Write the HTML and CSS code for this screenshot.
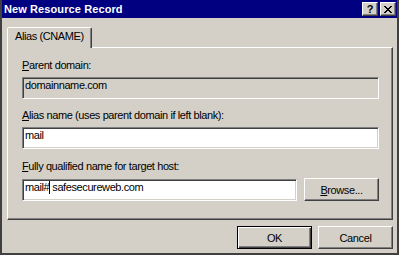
FILE: index.html
```html
<!DOCTYPE html>
<html lang="en">
<head>
    <meta charset="UTF-8" />
    <title>New Resource Record</title>
    <link rel="stylesheet" href="styles.css">
</head>
<body>
    <div class="window">
        <div class="titlebar">
            <span class="title">New Resource Record</span>
            <div class="caption-buttons">
                <span class="cap-btn help">?</span>
                <span class="cap-btn close">
                    <svg width="8" height="7" viewBox="0 0 8 7" shape-rendering="crispEdges">
                        <path d="M0 0h2v1H0zM6 0h2v1H6zM1 1h2v1H1zM5 1h2v1H5zM2 2h4v1H2zM3 3h2v1H3zM2 4h4v1H2zM1 5h2v1H1zM5 5h2v1H5zM0 6h2v1H0zM6 6h2v1H6z" fill="#000"/>
                    </svg>
                </span>
            </div>
        </div>
        <div class="client">
            <div class="tabs">
                <div class="tab active">Alias (CNAME)</div>
            </div>
            <div class="panel">
                <div class="field">
                    <label><u>P</u>arent domain:</label>
                    <div class="textbox readonly">domainname.com</div>
                </div>
                <div class="field">
                    <label><u>A</u>lias name (uses parent domain if left blank):</label>
                    <div class="textbox">mail</div>
                </div>
                <div class="field host">
                    <label><u>F</u>ully qualified name for target host:</label>
                    <div class="row">
                        <div class="textbox">mail#<span class="caret"></span>safesecureweb.com</div>
                        <button class="button"><u>B</u>rowse...</button>
                    </div>
                </div>
            </div>
            <div class="footer">
                <button class="button default">OK</button>
                <button class="button">Cancel</button>
            </div>
        </div>
    </div>
</body>
</html>
```

FILE: styles.css
```css
body {
    margin: 0;
    font-family: 'Liberation Sans', Arial, sans-serif;
    font-size: 11px;
    color: #000;
    overflow: hidden;
}
.window {
    width: 399px;
    height: 255px;
    box-sizing: border-box;
    background: #d4d0c8;
    border: 2px solid #404040;
    border-top: 0;
    display: flex;
    flex-direction: column;
}
.titlebar {
    height: 18px;
    flex: none;
    background: #000080;
    color: #fff;
    font-weight: bold;
    display: flex;
    align-items: center;
    justify-content: space-between;
    padding: 0 1px 0 2px;
}
.title {
    letter-spacing: 0.1px;
}
.caption-buttons {
    display: flex;
    gap: 2px;
}
.cap-btn {
    width: 16px;
    height: 14px;
    box-sizing: border-box;
    background: #d4d0c8;
    border: 1px solid;
    border-color: #fff #404040 #404040 #fff;
    box-shadow: inset -1px -1px #808080;
    display: flex;
    align-items: center;
    justify-content: center;
    color: #000;
    font-weight: bold;
    font-size: 11px;
    line-height: 12px;
}
.client {
    flex: 1;
    display: flex;
    flex-direction: column;
    padding: 9px 4px 0 5px;
    letter-spacing: -0.4px;
}
.tabs {
    display: flex;
}
.tab {
    position: relative;
    z-index: 1;
    width: 85px;
    height: 21px;
    box-sizing: border-box;
    padding: 2px 0 0 7px;
    line-height: 13px;
    background: #d4d0c8;
    border: 1px solid;
    border-bottom: 0;
    border-color: #fff #404040 transparent #fff;
    border-radius: 2px 2px 0 0;
    box-shadow: inset -1px 0 #808080;
    margin-bottom: -1px;
}
.panel {
    height: 173px;
    box-sizing: border-box;
    border: 1px solid;
    border-color: #fff #404040 #404040 #fff;
    box-shadow: inset -1px -1px #808080;
    padding: 11px 13px 0 14px;
}
.field label {
    display: block;
    line-height: 13px;
    margin-bottom: 5px;
}
.field + .field {
    margin-top: 10px;
}
.field.host {
    margin-top: 11px;
}
.textbox {
    height: 22px;
    box-sizing: border-box;
    background: #fff;
    border: 1px solid;
    border-color: #808080 #fff #fff #808080;
    box-shadow: inset 1px 1px #404040, inset -1px -1px #d4d0c8;
    padding: 1px 2px;
    line-height: 13px;
    white-space: nowrap;
}
.textbox.readonly {
    background: #d4d0c8;
}
.caret {
    display: inline-block;
    width: 1px;
    height: 13px;
    margin: 0 2px 0 0;
    background: #000;
    vertical-align: top;
}
.row {
    display: flex;
    align-items: center;
    gap: 7px;
}
.row .textbox {
    flex: 1;
}
.button {
    width: 75px;
    height: 23px;
    box-sizing: border-box;
    padding: 0;
    font-family: inherit;
    font-size: 11px;
    letter-spacing: inherit;
    color: #000;
    background: #d4d0c8;
    border: 1px solid;
    border-color: #fff #404040 #404040 #fff;
    box-shadow: inset -1px -1px #808080;
    flex: none;
}
.button.default {
    border-color: #000;
    box-shadow: inset 1px 1px #fff, inset -1px -1px #404040, inset -2px -2px #808080;
}
.footer {
    display: flex;
    justify-content: flex-end;
    gap: 6px;
    margin-top: 6px;
}
```
